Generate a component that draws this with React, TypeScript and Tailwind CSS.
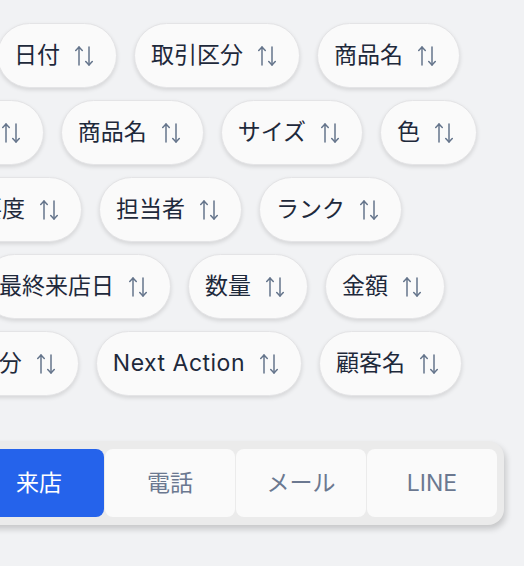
import React from 'react';

const FONT = 'font-["Inter","Noto_Sans_CJK_JP",sans-serif]';

function SortIcon() {
  return (
    <svg width="18" height="20" viewBox="0 0 18 20" fill="none" stroke="#64748b" strokeWidth="1.5" strokeLinecap="round" strokeLinejoin="round" className="shrink-0">
      <path d="M4 1v18" />
      <path d="M0.75 4.5 4 1l3.25 3.5" />
      <path d="M14 1v18" />
      <path d="M10.75 15.5 14 19l3.25-3.5" />
    </svg>
  );
}

function Pill({ label }: { label: string }) {
  const latin = /^[A-Za-z ]+$/.test(label);
  return (
    <div className="shrink-0 h-[65px] flex items-center pl-[16px] pr-[23px] rounded-full bg-[#fafafa] border border-[#e4e4e6] shadow-[0_2px_4px_rgba(0,0,0,0.12)]">
      <span className={`text-[23px] leading-none text-[#1e293b] whitespace-nowrap ${latin ? 'tracking-[0.5px]' : ''}`}>{label}</span>
      <span className="ml-[15px] flex">
        <SortIcon />
      </span>
    </div>
  );
}

const rows: { end: string; labels: string[] }[] = [
  { end: 'w-[460px]', labels: ['日付', '取引区分', '商品名'] },
  { end: 'w-[477px]', labels: ['カテゴリ', '商品名', 'サイズ', '色'] },
  { end: 'w-[402px]', labels: ['重要度', '担当者', 'ランク'] },
  { end: 'w-[445px]', labels: ['最終来店日', '数量', '金額'] },
  { end: 'w-[462px]', labels: ['来店区分', 'Next Action', '顧客名'] },
];

const channels = ['来店', '電話', 'メール', 'LINE'];

export default function App() {
  return (
    <div className={`w-[524px] h-[566px] overflow-hidden bg-[#f1f2f4] pt-[23px] ${FONT}`}>
      {/* Sort chips */}
      <div className="flex flex-col gap-[12px]">
        {rows.map((row, i) => (
          <div key={i} className={`${row.end} flex justify-end gap-[17px]`}>
            {row.labels.map((l) => (
              <Pill key={l} label={l} />
            ))}
          </div>
        ))}
      </div>

      {/* Channel segmented control */}
      <div className="w-[504px] flex justify-end mt-[45px]">
        <div className="shrink-0 flex gap-px px-[7px] py-[8px] rounded-[16px] bg-[#ebebeb] shadow-[2px_4px_6px_rgba(0,0,0,0.18)]">
          {channels.map((c, i) => (
            <div
              key={c}
              className={
                i === 0
                  ? 'w-[130px] h-[68px] rounded-[8px] bg-[#2563eb] text-white flex items-center justify-center text-[23px]'
                  : 'w-[130px] h-[68px] rounded-[8px] bg-[#fafafa] text-[#6b7890] flex items-center justify-center text-[23px]'
              }
            >
              {c}
            </div>
          ))}
        </div>
      </div>
    </div>
  );
}
